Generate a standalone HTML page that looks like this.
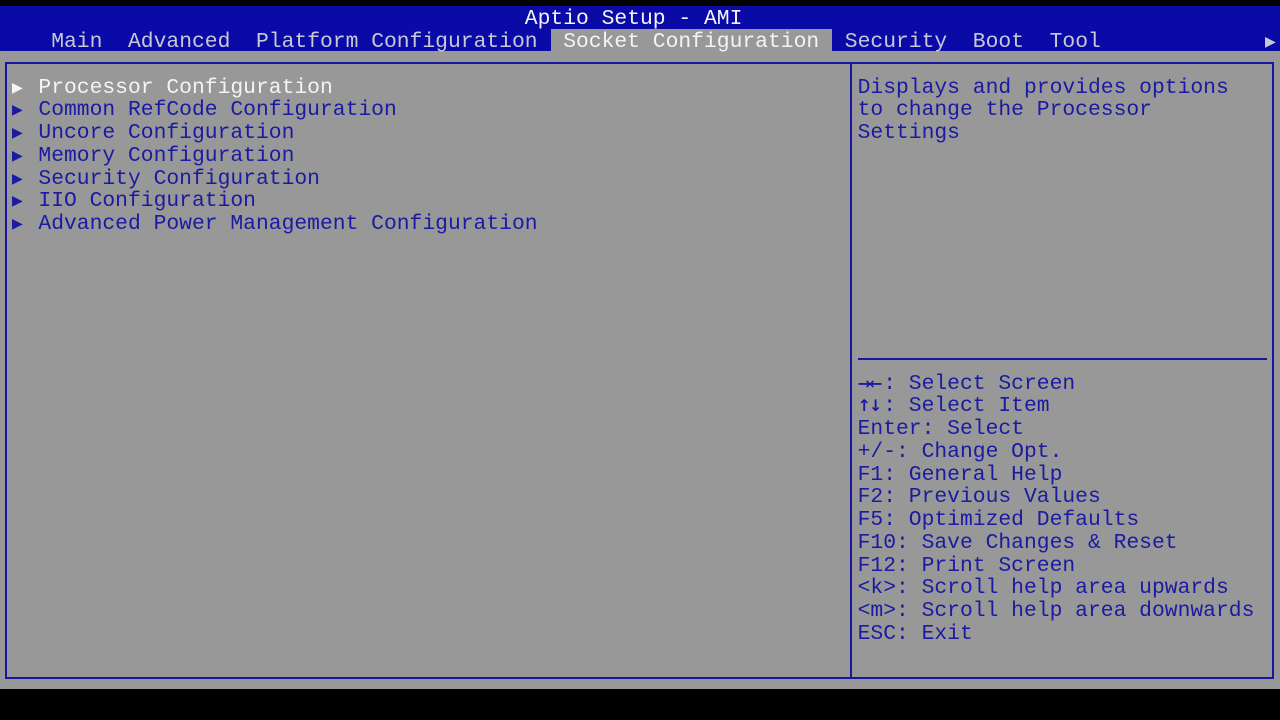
<!DOCTYPE html>
<html><head><meta charset="utf-8"><style>
html,body{margin:0;padding:0;width:1280px;height:720px;overflow:hidden;background:#000;}
body{position:relative;font-family:"Liberation Mono","DejaVu Sans Mono",monospace;font-size:21.33px;}
.t{position:absolute;white-space:pre;line-height:22.75px;height:22.75px;margin-top:2px;}
.blue{position:absolute;left:0;top:6px;width:1280px;height:45px;background:#0a0aa6;}
.gray{position:absolute;left:0;top:51px;width:1280px;height:638px;background:#989898;}
.sel{position:absolute;left:551px;top:29px;width:281px;height:22px;background:#989898;}
.ln{position:absolute;background:#1616a0;}
.w{color:#f4f4f4}.lg{color:#c8c8d8}.b{color:#1a1aa2}
.tri{font-size:14px;font-family:"DejaVu Sans",sans-serif;}
.ar{display:inline-block;width:25.6px;font-family:"DejaVu Sans",sans-serif;font-size:16px;font-weight:bold;letter-spacing:-2px;}
</style></head><body>
<div class="blue"></div>
<div class="gray"></div>
<div class="sel"></div>
<div class="t w" style="left:524.8px;top:5.6px">Aptio Setup - AMI</div>
<div class="t lg" style="left:51.2px;top:28.6px">Main</div>
<div class="t lg" style="left:128px;top:28.6px">Advanced</div>
<div class="t lg" style="left:256px;top:28.6px">Platform Configuration</div>
<div class="t w" style="left:563.2px;top:28.6px">Socket Configuration</div>
<div class="t lg" style="left:844.8px;top:28.6px">Security</div>
<div class="t lg" style="left:972.8px;top:28.6px">Boot</div>
<div class="t lg" style="left:1049.6px;top:28.6px">Tool</div>
<div class="t lg tri" style="left:1265px;top:28.6px">&#9654;</div>
<div class="ln" style="left:5px;top:62px;width:1269px;height:2px"></div>
<div class="ln" style="left:5px;top:677px;width:1269px;height:2px"></div>
<div class="ln" style="left:5px;top:62px;width:2px;height:617px"></div>
<div class="ln" style="left:1272px;top:62px;width:2px;height:617px"></div>
<div class="ln" style="left:850px;top:62px;width:2px;height:617px"></div>
<div class="ln" style="left:858px;top:358px;width:409px;height:2px"></div>
<div class="t w tri" style="left:12px;top:74.6px">&#9654;</div>
<div class="t w" style="left:38.4px;top:74.6px">Processor Configuration</div>
<div class="t b tri" style="left:12px;top:97.35px">&#9654;</div>
<div class="t b" style="left:38.4px;top:97.35px">Common RefCode Configuration</div>
<div class="t b tri" style="left:12px;top:120.1px">&#9654;</div>
<div class="t b" style="left:38.4px;top:120.1px">Uncore Configuration</div>
<div class="t b tri" style="left:12px;top:142.85px">&#9654;</div>
<div class="t b" style="left:38.4px;top:142.85px">Memory Configuration</div>
<div class="t b tri" style="left:12px;top:165.6px">&#9654;</div>
<div class="t b" style="left:38.4px;top:165.6px">Security Configuration</div>
<div class="t b tri" style="left:12px;top:188.35px">&#9654;</div>
<div class="t b" style="left:38.4px;top:188.35px">IIO Configuration</div>
<div class="t b tri" style="left:12px;top:211.1px">&#9654;</div>
<div class="t b" style="left:38.4px;top:211.1px">Advanced Power Management Configuration</div>
<div class="t b" style="left:857.6px;top:74.6px">Displays and provides options</div>
<div class="t b" style="left:857.6px;top:97.35px">to change the Processor</div>
<div class="t b" style="left:857.6px;top:120.1px">Settings</div>
<div class="t b" style="left:857.6px;top:370.6px"><span class="ar">&#8594;&#8592;</span>: Select Screen</div>
<div class="t b" style="left:857.6px;top:393.35px"><span class="ar">&#8593;&#8595;</span>: Select Item</div>
<div class="t b" style="left:857.6px;top:416.1px">Enter: Select</div>
<div class="t b" style="left:857.6px;top:438.85px">+/-: Change Opt.</div>
<div class="t b" style="left:857.6px;top:461.6px">F1: General Help</div>
<div class="t b" style="left:857.6px;top:484.35px">F2: Previous Values</div>
<div class="t b" style="left:857.6px;top:507.1px">F5: Optimized Defaults</div>
<div class="t b" style="left:857.6px;top:529.85px">F10: Save Changes &amp; Reset</div>
<div class="t b" style="left:857.6px;top:552.6px">F12: Print Screen</div>
<div class="t b" style="left:857.6px;top:575.35px">&lt;k&gt;: Scroll help area upwards</div>
<div class="t b" style="left:857.6px;top:598.1px">&lt;m&gt;: Scroll help area downwards</div>
<div class="t b" style="left:857.6px;top:620.85px">ESC: Exit</div>
</body></html>
